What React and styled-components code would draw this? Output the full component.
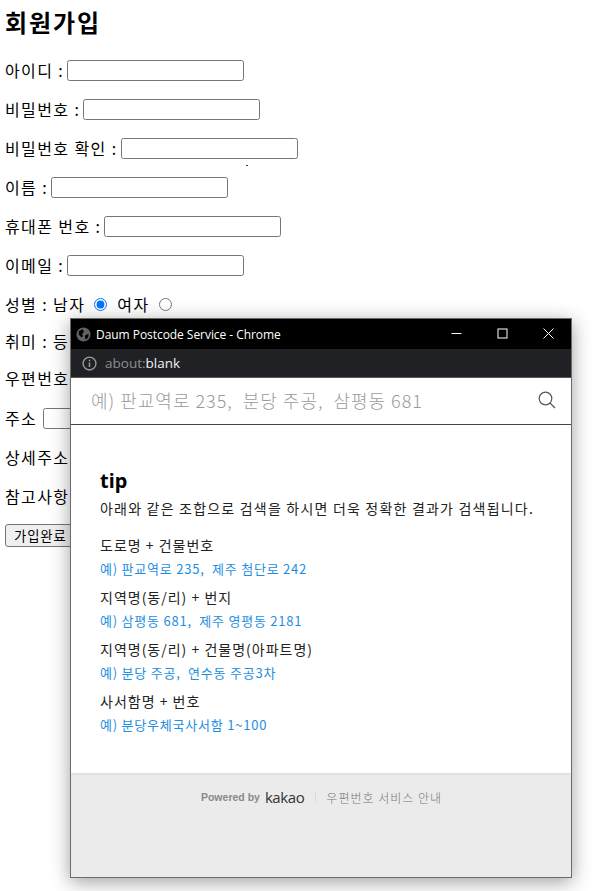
import React from "react";
import styled, { createGlobalStyle } from "styled-components";

const kr = `"Noto Sans CJK KR", "Liberation Sans", sans-serif`;

const GlobalStyle = createGlobalStyle`
  html, body { margin: 0; padding: 0; background: #fff; }
  body { font-family: ${kr}; color: #000; width: 614px; height: 891px; overflow: hidden; }
  * { box-sizing: border-box; }
`;

const Page = styled.div`
  position: relative;
  width: 614px;
  height: 891px;
  padding: 5px 0 0 5px;
  overflow: hidden;
`;

const Title = styled.h1`
  margin: 0 0 20px;
  font-size: 24px;
  line-height: 34px;
  font-weight: 700;
  letter-spacing: 1.9px;
`;

const Form = styled.form`
  display: flex;
  flex-direction: column;
  gap: 17px;
`;

const Row = styled.div`
  display: flex;
  align-items: center;
  height: ${(p) => p.$h || 22}px;
  margin-top: ${(p) => p.$top || 0}px;
  font-size: 16px;
  line-height: 22px;
  letter-spacing: 1.4px;
  white-space: pre;
`;

const TextInput = styled.input`
  width: 177px;
  height: 21px;
  flex: none;
  margin-left: ${(p) => p.$gap ?? 3}px;
  padding: 0 2px;
  background: #fff;
  border: 1px solid #767676;
  border-radius: 2.5px;
  outline: none;
`;

const Radio = styled.input`
  width: 13px;
  height: 13px;
  margin: 1px 10px 0 9px;
  accent-color: #0075ff;
`;

const SubmitButton = styled.button`
  align-self: flex-start;
  width: 75px;
  height: 23px;
  padding: 0 0 0 8px;
  text-align: left;
  font-family: ${kr};
  font-size: 13.3px;
  line-height: 18px;
  letter-spacing: 0.9px;
  color: #000;
  background: #efefef;
  border: 1px solid #767676;
  border-radius: 3px;
`;

const Speck = styled.i`
  position: absolute;
  left: 246px;
  top: 165px;
  width: 2px;
  height: 1px;
  background: #334;
`;

const PopupWindow = styled.div`
  position: absolute;
  left: 70px;
  top: 318px;
  width: 502px;
  height: 560px;
  display: flex;
  flex-direction: column;
  background: #fff;
  border: 1px solid #6b6b6b;
  box-shadow: 0 4px 18px rgba(0, 0, 0, 0.38);
`;

const TitleBar = styled.div`
  display: flex;
  align-items: center;
  height: 30px;
  flex: none;
  padding-left: 5px;
  background: #000;
  color: #fff;
  font-family: "Open Sans", "Liberation Sans", sans-serif;
  font-size: 12px;
  letter-spacing: -0.05px;
`;

const TitleText = styled.span`
  margin-left: 5px;
  flex: 1;
`;

const WinButton = styled.span`
  display: flex;
  align-items: center;
  justify-content: center;
  width: 46px;
  height: 30px;
  padding-bottom: 2px;
`;

const AddressBar = styled.div`
  display: flex;
  align-items: center;
  gap: 8px;
  height: 29px;
  flex: none;
  padding-left: 11px;
  background: #202124;
  border-bottom: 1px solid #55565a;
  font-family: "Open Sans", "Liberation Sans", sans-serif;
  font-size: 13.5px;
  color: #8d8e91;
`;

const AddressStrong = styled.span`
  color: #f1f1f2;
`;

const SearchBar = styled.div`
  display: flex;
  align-items: center;
  justify-content: space-between;
  height: 47px;
  flex: none;
  padding: 0 15px 2px 20px;
  border-bottom: 1px solid #444;
  font-size: 18px;
  font-weight: 300;
  color: #9a9a9a;
  letter-spacing: 1px;
  white-space: pre;
`;

const TipBody = styled.div`
  flex: 1;
  padding: 42px 0 0 29px;
`;

const TipTitle = styled.h2`
  margin: 0;
  font-family: "Noto Sans", "Liberation Sans", sans-serif;
  font-size: 20px;
  line-height: 28px;
  font-weight: 700;
  color: #000;
`;

const TipLead = styled.p`
  margin: 2px 0 15px;
  font-size: 14px;
  line-height: 22px;
  letter-spacing: 1.2px;
  color: #222;
`;

const TipGroup = styled.div`
  margin-bottom: 6px;
`;

const TipHead = styled.div`
  font-size: 14px;
  line-height: 22px;
  letter-spacing: 1px;
  color: #222;
`;

const TipExample = styled.div`
  margin-top: 2px;
  font-size: 13px;
  line-height: 22px;
  letter-spacing: 0.78px;
  white-space: pre;
  color: #1e8fe1;
`;

const Footer = styled.div`
  flex: none;
  height: 104px;
  padding: 12px 0 0 1px;
  background: #ebebeb;
  border-top: 2px solid #e2e2e2;
`;

const FooterLine = styled.div`
  display: flex;
  justify-content: center;
  align-items: center;
  height: 20px;
`;

const Powered = styled.span`
  font-family: "Liberation Sans", sans-serif;
  font-size: 10.5px;
  font-weight: 700;
  color: #8a8a8a;
`;

const Brand = styled.span`
  margin-left: 5px;
  font-family: "Open Sans", "Liberation Sans", sans-serif;
  font-size: 15px;
  letter-spacing: -0.4px;
  color: #333;
`;

const Divider = styled.span`
  width: 1px;
  height: 12px;
  margin: 0 10px 0 11px;
  background: #dcdcdc;
`;

const FooterLink = styled.span`
  font-size: 12px;
  font-weight: 300;
  letter-spacing: 1px;
  color: #777;
`;

const tips = [
  ["도로명 + 건물번호", "예) 판교역로 235,  제주 첨단로 242"],
  ["지역명(동/리) + 번지", "예) 삼평동 681,  제주 영평동 2181"],
  ["지역명(동/리) + 건물명(아파트명)", "예) 분당 주공,  연수동 주공3차"],
  ["사서함명 + 번호", "예) 분당우체국사서함 1~100"],
];

export default function App() {
  return (
    <Page>
      <GlobalStyle />
      <Title>회원가입</Title>
      <Form onSubmit={(e) => e.preventDefault()}>
        <Row>아이디 :<TextInput /></Row>
        <Row>비밀번호 :<TextInput type="password" /></Row>
        <Row>비밀번호 확인 :<TextInput type="password" /></Row>
        <Row>이름 :<TextInput /></Row>
        <Row>휴대폰 번호 :<TextInput /></Row>
        <Row>이메일 :<TextInput /></Row>
        <Row $h={21}>
          성별 : 남자
          <Radio type="radio" name="gender" defaultChecked />
          여자
          <Radio type="radio" name="gender" />
        </Row>
        <Row $h={20}>취미 : 등산</Row>
        <Row $h={20}>우편번호 :</Row>
        <Row $top={2}>주소 <TextInput $gap={1} /></Row>
        <Row>상세주소 :<TextInput /></Row>
        <Row>참고사항 :<TextInput /></Row>
        <SubmitButton type="button">가입완료</SubmitButton>
      </Form>
      <Speck />

      <PopupWindow>
        <TitleBar>
          <svg width="15" height="15" viewBox="0 0 16 16">
            <circle cx="8" cy="8" r="7.5" fill="#5f6368" />
            <path d="M3 4.5 7 2.5 8.5 5 6.5 7.5 7.5 10 5.5 11 3 8ZM10 8.5 13.5 7.5 13 11 10.5 13.5 9.5 11Z" fill="#000" />
          </svg>
          <TitleText>Daum Postcode Service - Chrome</TitleText>
          <WinButton>
            <svg width="11" height="11" viewBox="0 0 11 11"><path d="M0.5 5.5h10" stroke="#fff" /></svg>
          </WinButton>
          <WinButton>
            <svg width="11" height="11" viewBox="0 0 11 11"><rect x="1" y="1" width="9" height="9" fill="none" stroke="#fff" /></svg>
          </WinButton>
          <WinButton>
            <svg width="11" height="11" viewBox="0 0 11 11"><path d="M0.5 0.5l10 10M10.5 0.5l-10 10" stroke="#fff" /></svg>
          </WinButton>
        </TitleBar>
        <AddressBar>
          <svg width="15" height="15" viewBox="0 0 14 14">
            <circle cx="7" cy="7" r="6" fill="none" stroke="#9a9b9e" strokeWidth="1.3" />
            <path d="M7 6v4.2M7 3.6v1.4" stroke="#9a9b9e" strokeWidth="1.4" />
          </svg>
          <span>about:<AddressStrong>blank</AddressStrong></span>
        </AddressBar>
        <SearchBar>
          {"예) 판교역로 235,  분당 주공,  삼평동 681"}
          <svg width="18" height="18" viewBox="0 0 18 18">
            <circle cx="7.5" cy="7.5" r="6.3" fill="none" stroke="#555" strokeWidth="1.2" />
            <path d="M12 12l5 5" stroke="#555" strokeWidth="1.3" />
          </svg>
        </SearchBar>
        <TipBody>
          <TipTitle>tip</TipTitle>
          <TipLead>아래와 같은 조합으로 검색을 하시면 더욱 정확한 결과가 검색됩니다.</TipLead>
          {tips.map(([head, example]) => (
            <TipGroup key={head}>
              <TipHead>{head}</TipHead>
              <TipExample>{example}</TipExample>
            </TipGroup>
          ))}
        </TipBody>
        <Footer>
          <FooterLine>
            <Powered>Powered by</Powered>
            <Brand>kakao</Brand>
            <Divider />
            <FooterLink>우편번호 서비스 안내</FooterLink>
          </FooterLine>
        </Footer>
      </PopupWindow>
    </Page>
  );
}
